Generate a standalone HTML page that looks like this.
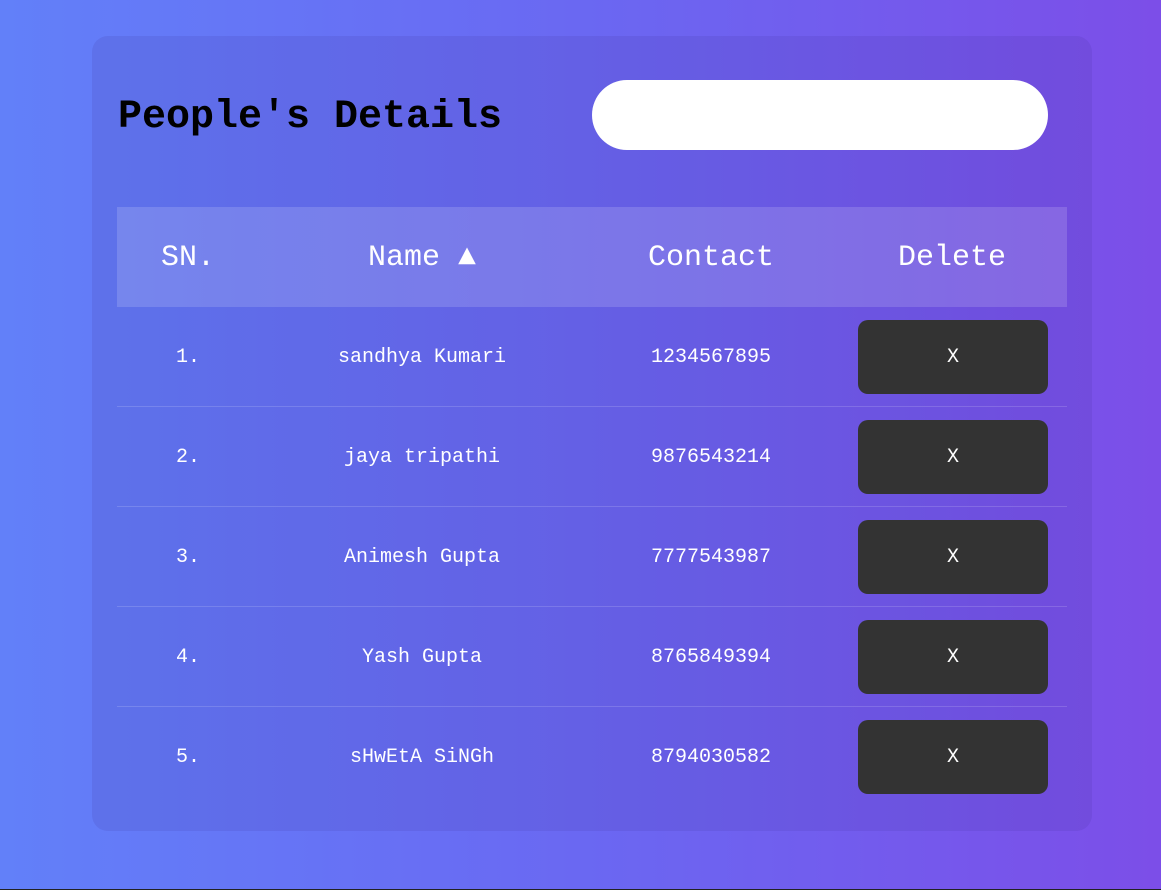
<!DOCTYPE html>
<html><head><style>
html,body{margin:0;padding:0;}
body{width:1161px;height:889px;border-bottom:1px solid #222;background:linear-gradient(90deg,#6280f9 0%,#6a68f2 50%,#7c4ee8 100%);font-family:"Liberation Mono",monospace;position:relative;overflow:hidden}
.card{position:absolute;left:92px;top:36px;width:1000px;height:795px;border-radius:16px;background:rgba(60,40,140,0.12)}
h1{position:absolute;left:26px;top:58px;margin:0;font-size:40px;font-weight:bold;color:#000;line-height:48px}
.search{position:absolute;left:500px;top:44px;width:456px;height:70px;border-radius:35px;background:#fff}
table{position:absolute;left:25px;top:171px;width:950px;border-collapse:collapse;color:#fff}
th{height:100px;font-size:30px;font-weight:normal;background:rgba(255,255,255,0.15);padding:2px 0 0 0;box-sizing:border-box}
td{height:97px;font-size:20px;text-align:center;border-bottom:1px solid rgba(255,255,255,0.15);padding:2px 0 0 0}
td.b{padding:0 0 0 2px;height:99px}
tr:last-child td{border-bottom:none}
.btn{display:inline-block;width:190px;height:74px;line-height:76px;background:#333;border-radius:10px;color:#fff;font-size:20px;vertical-align:middle}
</style></head><body>
<div class="card">
<h1>People's Details</h1>
<div class="search"></div>
<table>
<colgroup><col style="width:142px"><col style="width:326px"><col style="width:252px"><col style="width:230px"></colgroup>
<tr><th>SN.</th><th>Name ▲</th><th>Contact</th><th>Delete</th></tr>
<tr><td>1.</td><td>sandhya Kumari</td><td>1234567895</td><td class="b"><span class="btn">X</span></td></tr>
<tr><td>2.</td><td>jaya tripathi</td><td>9876543214</td><td class="b"><span class="btn">X</span></td></tr>
<tr><td>3.</td><td>Animesh Gupta</td><td>7777543987</td><td class="b"><span class="btn">X</span></td></tr>
<tr><td>4.</td><td>Yash Gupta</td><td>8765849394</td><td class="b"><span class="btn">X</span></td></tr>
<tr><td>5.</td><td>sHwEtA SiNGh</td><td>8794030582</td><td class="b"><span class="btn">X</span></td></tr>
</table>
</div>
</body></html>
